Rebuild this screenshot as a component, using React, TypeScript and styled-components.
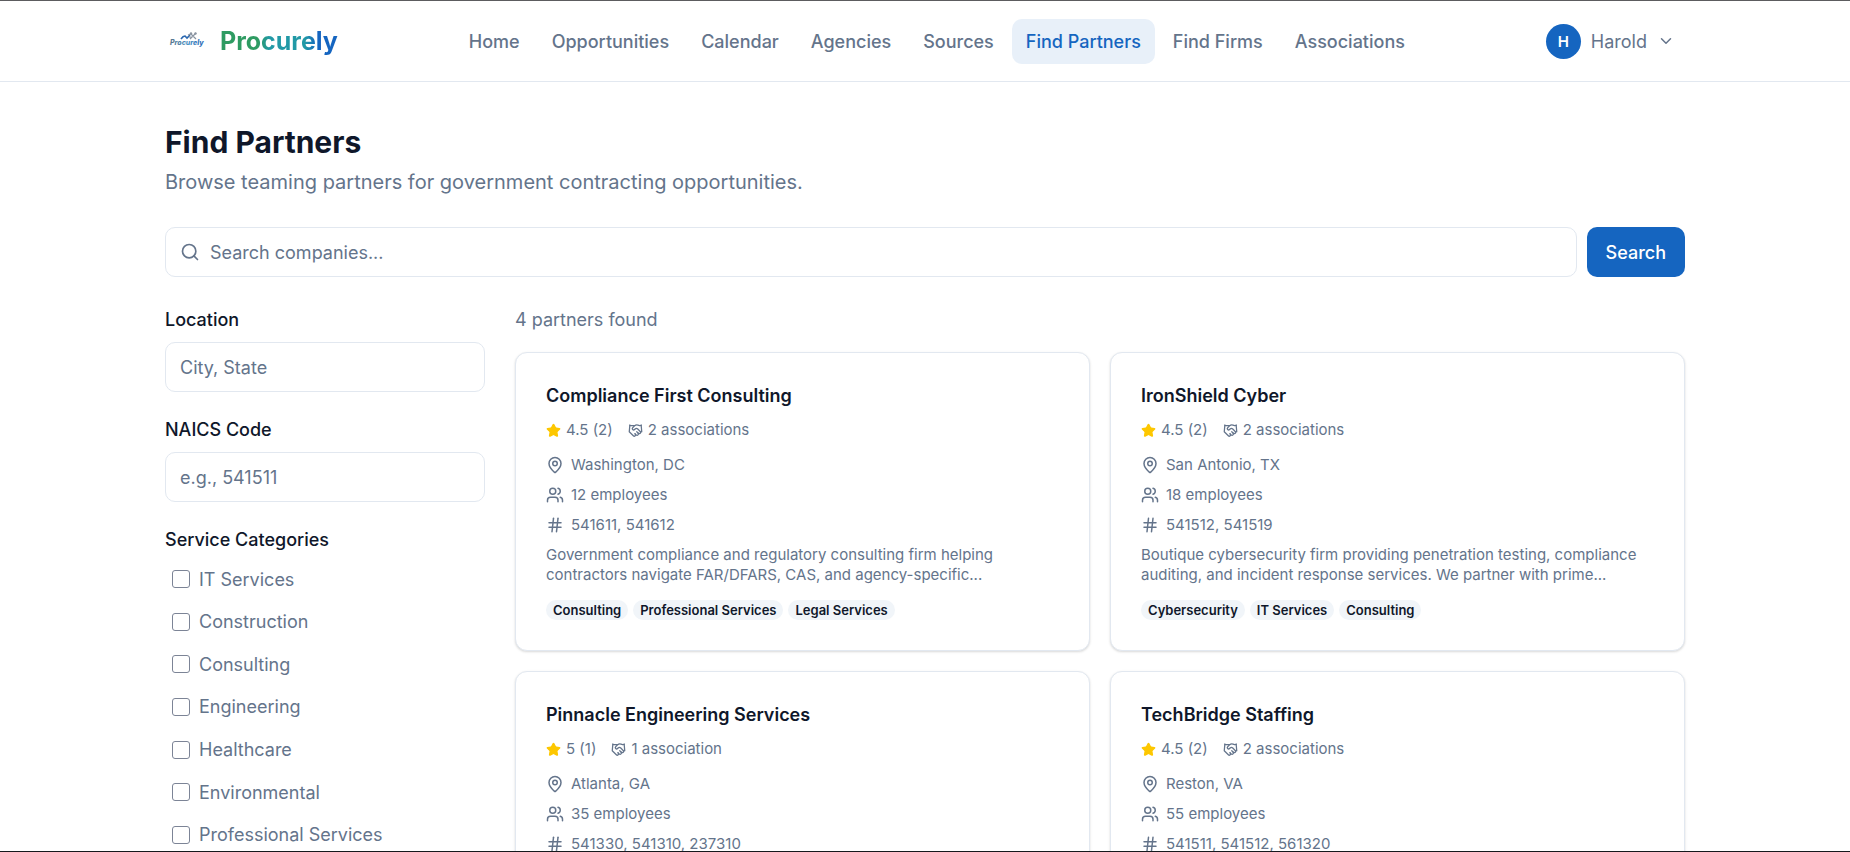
import React from "react";
import styled, { createGlobalStyle, css } from "styled-components";
import { ChevronDown, Handshake, Hash, MapPin, Search, Star, Users } from "lucide-react";

const color = {
  text: "#0f172a",
  muted: "#64748b",
  border: "#e2e8f0",
  primary: "#1565c0",
  primarySoft: "#e8f0f9",
  badge: "#f1f5f9",
  star: "#fdc700",
};

const GlobalStyle = createGlobalStyle`
  *, *::before, *::after { box-sizing: border-box; }
  body {
    margin: 0;
    background: #fff;
    color: ${color.text};
    font-family: Inter, "Liberation Sans", sans-serif;
    font-size: 18px;
    line-height: 25px;
  }
  h1, h2, h3, p, ul { margin: 0; padding: 0; }
  ul { list-style: none; }
  button, input { font: inherit; }
`;

const Shell = styled.div`
  height: 100vh;
  overflow: hidden auto;
  scrollbar-width: none;
  border-top: 1px solid #5c5c5f;
  border-bottom: 1px solid #16181d;
`;

const container = css`
  width: 100%;
  max-width: 1600px;
  margin: 0 auto;
  padding-left: 40px;
  padding-right: 40px;
`;

const Header = styled.header`
  border-bottom: 1px solid ${color.border};
`;

const HeaderInner = styled.div`
  ${container}
  height: 80px;
  display: flex;
  align-items: center;
  justify-content: space-between;
`;

const Brand = styled.a`
  display: flex;
  align-items: center;
  gap: 10px;
  text-decoration: none;
`;

const BrandName = styled.span`
  font-size: 25px;
  line-height: 35px;
  font-weight: 700;
  color: transparent;
  background: linear-gradient(90deg, #2e9b62 0%, #2e9b62 32%, #2199a6 42%, #2199a6 72%, ${color.primary} 82%);
  background-clip: text;
  -webkit-background-clip: text;
`;

const Nav = styled.nav`
  display: flex;
  gap: 4px;
`;

const NavLink = styled.a<{ $active?: boolean }>`
  padding: 10px 14px;
  border-radius: 10px;
  font-weight: 500;
  text-decoration: none;
  color: ${(p) => (p.$active ? color.primary : color.muted)};
  background: ${(p) => (p.$active ? color.primarySoft : "transparent")};
`;

const UserButton = styled.button`
  display: flex;
  align-items: center;
  gap: 10px;
  padding: 5px 10px;
  border: 0;
  background: none;
  color: ${color.muted};
  cursor: pointer;
`;

const Avatar = styled.span`
  width: 35px;
  height: 35px;
  border-radius: 50%;
  display: grid;
  place-items: center;
  background: ${color.primary};
  color: #fff;
  font-size: 15px;
  font-weight: 600;
`;

const Main = styled.main`
  ${container}
  padding-top: 40px;
  padding-bottom: 40px;
`;

const Title = styled.h1`
  font-size: 30px;
  line-height: 40px;
  font-weight: 700;
`;

const Subtitle = styled.p`
  margin-top: 5px;
  font-size: 20px;
  line-height: 30px;
  color: ${color.muted};
`;

const SearchForm = styled.form`
  display: flex;
  gap: 10px;
  margin: 30px 0;
`;

const inputBox = css`
  width: 100%;
  height: 50px;
  border: 1px solid ${color.border};
  border-radius: 10px;
  background: #fff;
  color: ${color.text};
`;

const SearchField = styled.label`
  ${inputBox}
  flex: 1;
  display: flex;
  align-items: center;
  gap: 10px;
  padding: 0 14px;
  color: ${color.muted};
`;

const SearchInput = styled.input`
  flex: 1;
  min-width: 0;
  border: 0;
  padding: 0;
  outline: none;
  background: none;
  color: ${color.text};
  &::placeholder { color: ${color.muted}; opacity: 1; }
`;

const SubmitButton = styled.button`
  height: 50px;
  padding: 0 19px;
  border: 0;
  border-radius: 10px;
  background: ${color.primary};
  color: #fff;
  font-weight: 500;
  cursor: pointer;
`;

const Columns = styled.div`
  display: grid;
  grid-template-columns: 320px minmax(0, 1fr);
  gap: 30px;
  align-items: start;
`;

const Filters = styled.aside`
  display: flex;
  flex-direction: column;
  gap: 25px;
`;

const Field = styled.div`
  display: flex;
  flex-direction: column;
  gap: 10px;
`;

const FieldLabel = styled.label`
  font-weight: 500;
`;

const TextInput = styled.input`
  ${inputBox}
  padding: 0 14px;
  &::placeholder { color: ${color.muted}; opacity: 1; }
`;

const CategoryGroup = styled.fieldset`
  margin: 0;
  padding: 0;
  border: 0;
  min-width: 0;
`;

const Legend = styled.legend`
  padding: 0;
  font-weight: 500;
`;

const CategoryList = styled.ul`
  display: grid;
  grid-auto-rows: 1fr;
  height: 298px;
  margin-top: 6px;
`;

const CategoryLabel = styled.label`
  height: 100%;
  display: flex;
  align-items: center;
  gap: 9px;
  padding-left: 7px;
  color: ${color.muted};
`;

const Checkbox = styled.input`
  appearance: none;
  width: 18px;
  height: 18px;
  margin: 0;
  border: 1px solid #7c8496;
  border-radius: 3px;
  background: #fff;
  &:checked { background: ${color.primary}; border-color: ${color.primary}; }
`;

const ResultCount = styled.p`
  color: ${color.muted};
  margin-bottom: 20px;
`;

const CardGrid = styled.div`
  display: grid;
  grid-template-columns: repeat(2, minmax(0, 1fr));
  gap: 20px;
`;

const Card = styled.article`
  padding: 30px;
  border: 1px solid ${color.border};
  border-radius: 12px;
  background: #fff;
  box-shadow: 0 1px 3px rgba(0, 0, 0, 0.1), 0 1px 2px rgba(0, 0, 0, 0.06);
  color: ${color.muted};
  font-size: 15px;
  line-height: 20px;
`;

const CardTitle = styled.h2`
  font-size: 18px;
  line-height: 25px;
  font-weight: 600;
  color: ${color.text};
`;

const MetaRow = styled.div`
  display: flex;
  gap: 15px;
  margin: 12px 0 15px;
`;

const Meta = styled.span`
  display: flex;
  align-items: center;
  gap: 5px;
`;

const Facts = styled.ul`
  display: flex;
  flex-direction: column;
  gap: 10px;
`;

const Fact = styled.li`
  display: flex;
  align-items: center;
  gap: 7px;
`;

const Description = styled.p`
  margin: 10px 0 15px;
  display: -webkit-box;
  -webkit-box-orient: vertical;
  -webkit-line-clamp: 2;
  overflow: hidden;
`;

const Badges = styled.ul`
  display: flex;
  flex-wrap: wrap;
  gap: 5px;
`;

const Badge = styled.li`
  padding: 0 7px;
  border-radius: 10px;
  background: ${color.badge};
  color: ${color.text};
  font-size: 13px;
  font-weight: 600;
`;

const LogoMark = () => (
  <svg width="45" height="45" viewBox="0 0 45 45" aria-hidden="true">
    <defs>
      <linearGradient id="mark" x1="0" x2="1">
        <stop offset="0" stopColor="#56728a" />
        <stop offset="0.5" stopColor="#4f93c4" />
        <stop offset="1" stopColor="#2565b5" />
      </linearGradient>
    </defs>
    <path d="M16 20 Q18 17 20 17 L22 19 L25 16" fill="none" stroke="#2a67b0" strokeWidth="1.6" />
    <path d="M23 16 L26 15 L31 20 M25 20 L31 14 M27 18 L24 18" fill="none" stroke="#8a94a1" strokeWidth="1.2" />
    <circle cx="26" cy="14.5" r="1.2" fill="#8a94a1" />
    <circle cx="30.5" cy="14.5" r="1.2" fill="#8a94a1" />
    <text x="5" y="26" fontSize="7" fontWeight="800" fontStyle="italic" fill="url(#mark)">Procurely</text>
  </svg>
);

const navItems = ["Home", "Opportunities", "Calendar", "Agencies", "Sources", "Find Partners", "Find Firms", "Associations"];

const categories = ["IT Services", "Construction", "Consulting", "Engineering", "Healthcare", "Environmental", "Professional Services"];

interface Partner {
  name: string;
  rating: string;
  associations: string;
  location: string;
  employees: number;
  naics: string;
  description?: string;
  tags?: string[];
}

const partners: Partner[] = [
  {
    name: "Compliance First Consulting",
    rating: "4.5 (2)",
    associations: "2 associations",
    location: "Washington, DC",
    employees: 12,
    naics: "541611, 541612",
    description: "Government compliance and regulatory consulting firm helping contractors navigate FAR/DFARS, CAS, and agency-specific...",
    tags: ["Consulting", "Professional Services", "Legal Services"],
  },
  {
    name: "IronShield Cyber",
    rating: "4.5 (2)",
    associations: "2 associations",
    location: "San Antonio, TX",
    employees: 18,
    naics: "541512, 541519",
    description: "Boutique cybersecurity firm providing penetration testing, compliance auditing, and incident response services. We partner with prime...",
    tags: ["Cybersecurity", "IT Services", "Consulting"],
  },
  {
    name: "Pinnacle Engineering Services",
    rating: "5 (1)",
    associations: "1 association",
    location: "Atlanta, GA",
    employees: 35,
    naics: "541330, 541310, 237310",
  },
  {
    name: "TechBridge Staffing",
    rating: "4.5 (2)",
    associations: "2 associations",
    location: "Reston, VA",
    employees: 55,
    naics: "541511, 541512, 561320",
  },
];

const PartnerCard = ({ partner }: { partner: Partner }) => (
  <Card>
    <CardTitle>{partner.name}</CardTitle>
    <MetaRow>
      <Meta>
        <Star size={15} color={color.star} fill={color.star} />
        {partner.rating}
      </Meta>
      <Meta>
        <Handshake size={15} />
        {partner.associations}
      </Meta>
    </MetaRow>
    <Facts>
      <Fact>
        <MapPin size={18} />
        {partner.location}
      </Fact>
      <Fact>
        <Users size={18} />
        {partner.employees} employees
      </Fact>
      <Fact>
        <Hash size={18} />
        {partner.naics}
      </Fact>
    </Facts>
    {partner.description && <Description>{partner.description}</Description>}
    {partner.tags && (
      <Badges>
        {partner.tags.map((tag) => (
          <Badge key={tag}>{tag}</Badge>
        ))}
      </Badges>
    )}
  </Card>
);

export default function App() {
  return (
    <Shell>
      <GlobalStyle />
      <Header>
        <HeaderInner>
          <Brand href="#">
            <LogoMark />
            <BrandName>Procurely</BrandName>
          </Brand>
          <Nav>
            {navItems.map((item) => (
              <NavLink key={item} href="#" $active={item === "Find Partners"}>
                {item}
              </NavLink>
            ))}
          </Nav>
          <UserButton type="button">
            <Avatar>H</Avatar>
            Harold
            <ChevronDown size={18} />
          </UserButton>
        </HeaderInner>
      </Header>
      <Main>
        <Title>Find Partners</Title>
        <Subtitle>Browse teaming partners for government contracting opportunities.</Subtitle>
        <SearchForm onSubmit={(e) => e.preventDefault()}>
          <SearchField>
            <Search size={20} />
            <SearchInput type="text" aria-label="Search companies" placeholder="Search companies..." />
          </SearchField>
          <SubmitButton type="submit">Search</SubmitButton>
        </SearchForm>
        <Columns>
          <Filters>
            <Field>
              <FieldLabel htmlFor="location">Location</FieldLabel>
              <TextInput id="location" type="text" placeholder="City, State" />
            </Field>
            <Field>
              <FieldLabel htmlFor="naics">NAICS Code</FieldLabel>
              <TextInput id="naics" type="text" placeholder="e.g., 541511" />
            </Field>
            <CategoryGroup>
              <Legend>Service Categories</Legend>
              <CategoryList>
                {categories.map((category) => (
                  <li key={category}>
                    <CategoryLabel>
                      <Checkbox type="checkbox" />
                      {category}
                    </CategoryLabel>
                  </li>
                ))}
              </CategoryList>
            </CategoryGroup>
          </Filters>
          <section>
            <ResultCount>4 partners found</ResultCount>
            <CardGrid>
              {partners.map((partner) => (
                <PartnerCard key={partner.name} partner={partner} />
              ))}
            </CardGrid>
          </section>
        </Columns>
      </Main>
    </Shell>
  );
}
